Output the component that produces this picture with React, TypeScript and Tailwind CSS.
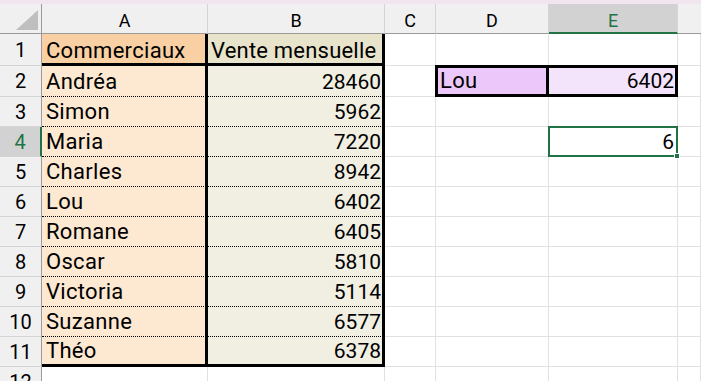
import React from "react";

const rows: [string, string][] = [
  ["Andréa", "28460"],
  ["Simon", "5962"],
  ["Maria", "7220"],
  ["Charles", "8942"],
  ["Lou", "6402"],
  ["Romane", "6405"],
  ["Oscar", "5810"],
  ["Victoria", "5114"],
  ["Suzanne", "6577"],
  ["Théo", "6378"],
];

const grid = "border-r border-b border-[#e1e1e1]";
const rowHead =
  "flex items-center justify-center leading-none bg-[#f0f0f0] border-r border-r-[#9b9b9b] border-b border-b-[#d4d4d4] text-[20px] text-black";

function Corner() {
  return (
    <div className="relative bg-[#f0f0f0] border-r border-r-[#9b9b9b] border-b border-b-[#9b9b9b]">
      <svg className="absolute right-[3px] bottom-[3px]" width="22" height="20" viewBox="0 0 22 20">
        <polygon points="22,0 22,20 0,20" fill="#bfbfbf" />
      </svg>
    </div>
  );
}

function ColHead({ label, selected }: { label: string; selected?: boolean }) {
  if (selected) {
    return (
      <div className="flex items-center justify-center pt-[5px] leading-none bg-[#d2d2d2] border-r border-r-[#d4d4d4] border-b-2 border-b-[#217346] text-[18px] text-[#217346]">
        {label}
      </div>
    );
  }
  return (
    <div className="flex items-center justify-center pt-[5px] leading-none bg-[#f0f0f0] border-r border-r-[#d4d4d4] border-b border-b-[#9b9b9b] text-[18px] text-black">
      {label}
    </div>
  );
}

export default function App() {
  return (
    <div className="w-[701px] h-[381px] overflow-hidden bg-white font-['Roboto',sans-serif] text-black">
      <div className="h-[4px] bg-[#f1e6ef]" />
      <div className="grid grid-cols-[42px_166px_177px_51px_113px_129px_1fr] grid-rows-[30px_32px_31px_repeat(10,30px)]">
        {/* header */}
        <Corner />
        <ColHead label="A" />
        <ColHead label="B" />
        <ColHead label="C" />
        <ColHead label="D" />
        <ColHead label="E" selected />
        <div className="bg-[#f0f0f0] border-b border-b-[#9b9b9b]" />

        {/* row 1 */}
        <div className={rowHead}>1</div>
        <div className="flex items-end pl-[4px] pb-[1px] leading-none tracking-[0.3px] bg-[#f9d0a3] border-r-[3px] border-r-black border-b-[3px] border-b-black text-[22px]">
          Commerciaux
        </div>
        <div className="flex items-end pl-[3px] pb-[1px] leading-none tracking-[0.2px] bg-[#e8e4cb] border-r-[3px] border-r-black border-b-[3px] border-b-black text-[22px]">
          Vente mensuelle
        </div>
        <div className={grid} />
        <div className={grid} />
        <div className={grid} />
        <div className={grid} />

        {rows.map(([name, val], i) => {
          const n = i + 2;
          const last = n === 11;
          return (
            <React.Fragment key={n}>
              {n === 4 ? (
                <div className="flex items-center justify-center leading-none bg-[#d2d2d2] border-r-2 border-r-[#217346] border-b border-b-[#d4d4d4] text-[20px] text-[#217346]">
                  4
                </div>
              ) : (
                <div className={rowHead}>{n}</div>
              )}
              <div
                className={
                  last
                    ? "flex items-end pl-[4px] pb-[2px] leading-none tracking-[0.3px] bg-[#fde8d2] border-r-[3px] border-r-black border-b-[3px] border-b-black text-[22px]"
                    : "flex items-end pl-[4px] pb-[3px] leading-none tracking-[0.3px] bg-[#fde8d2] border-r-[3px] border-r-black border-b border-b-black [border-bottom-style:dotted] text-[22px]"
                }
              >
                {name}
              </div>
              <div
                className={
                  last
                    ? "flex items-end justify-end pr-[1px] pb-[2px] leading-none bg-[#f1efe2] border-r-[3px] border-r-black border-b-[3px] border-b-black text-[21px]"
                    : "flex items-end justify-end pr-[1px] pb-[3px] leading-none bg-[#f1efe2] border-r-[3px] border-r-black border-b border-b-black [border-bottom-style:dotted] text-[21px]"
                }
              >
                {val}
              </div>
              <div className={grid} />
              {n === 2 ? (
                <>
                  <div className="-ml-[1px] -mt-[1px] flex items-end pl-[2px] pb-[2px] leading-none tracking-[0.3px] bg-[#ecc8fa] border-[3px] border-black text-[22px]">
                    Lou
                  </div>
                  <div className="-mt-[1px] flex items-end justify-end pr-[1px] pb-[2px] leading-none bg-[#f3e4fc] border-t-[3px] border-r-[3px] border-b-[3px] border-black text-[21px]">
                    6402
                  </div>
                </>
              ) : n === 4 ? (
                <>
                  <div className={grid} />
                  <div className="relative -ml-[1px] -mt-[1px] flex items-end justify-end pr-[2px] pb-[2px] leading-none border-2 border-[#217346] text-[21px]">
                    6
                    <div className="absolute -right-[4px] -bottom-[4px] w-[6px] h-[6px] bg-[#217346] border border-white" />
                  </div>
                </>
              ) : (
                <>
                  <div className={grid} />
                  <div className={grid} />
                </>
              )}
              <div className={grid} />
            </React.Fragment>
          );
        })}

        {/* row 12 */}
        <div className={rowHead}>12</div>
        <div className={grid} />
        <div className={grid} />
        <div className={grid} />
        <div className={grid} />
        <div className={grid} />
        <div className={grid} />
      </div>
    </div>
  );
}
